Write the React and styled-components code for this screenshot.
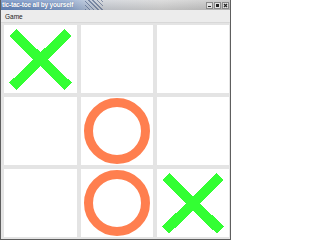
import React from "react";
import styled, { createGlobalStyle } from "styled-components";

const GlobalStyle = createGlobalStyle`
  html, body {
    margin: 0;
    padding: 0;
    background: #ffffff;
  }
  body {
    font-family: "DejaVu Sans", "Liberation Sans", sans-serif;
  }
`;

const colors = {
  frame: "#5e5e5e",
  board: "#e4e4e4",
  cell: "#ffffff",
  cross: "#33ff33",
  nought: "#ff7f4f",
  menu: "#ececec",
};

const Window = styled.div`
  width: 231px;
  height: 240px;
  box-sizing: border-box;
  display: flex;
  flex-direction: column;
  border: 1px solid ${colors.frame};
  border-top: none;
  overflow: hidden;
`;

const TitleBar = styled.div`
  height: 10px;
  flex: none;
  display: flex;
  align-items: center;
  margin: 0 -1px;
  background:
    linear-gradient(180deg, rgba(255, 255, 255, 0.25), rgba(0, 0, 0, 0.08)),
    linear-gradient(90deg, #5f82bb 0%, #7f9cc9 28%, #a4b6d2 36%, #c9cdd4 43%, #d2d2d2 70%, #bdbdbd 100%);
`;

const Title = styled.span`
  color: #ffffff;
  font-family: "Liberation Sans", sans-serif;
  font-weight: bold;
  font-size: 6.5px;
  letter-spacing: -0.2px;
  line-height: 10px;
  padding-left: 2px;
  white-space: nowrap;
  text-shadow: 0 0 1px rgba(40, 60, 100, 0.6);
`;

const Stripes = styled.div`
  width: 18px;
  height: 10px;
  margin-right: auto;
  margin-left: 12px;
  background: repeating-linear-gradient(
    45deg,
    rgba(60, 80, 120, 0.55) 0 1px,
    transparent 1px 3px
  );
`;

const Buttons = styled.div`
  display: flex;
  gap: 1px;
  padding-right: 2px;
`;

const WinButton = styled.div`
  width: 7px;
  height: 7px;
  box-sizing: border-box;
  border: 1px solid #8a8a8a;
  background: #e2e2e2;
  display: flex;
  align-items: center;
  justify-content: center;
`;

const MenuBar = styled.div`
  height: 12px;
  flex: none;
  background: ${colors.menu};
  border-bottom: 1px solid #d8d8d8;
  display: flex;
  align-items: center;
  padding-left: 4px;
  font-family: "Liberation Sans", sans-serif;
  font-size: 6.5px;
  color: #222222;
`;

const Board = styled.div`
  flex: 1;
  min-height: 0;
  display: grid;
  grid-template-columns: 73px 1fr 1fr;
  grid-template-rows: repeat(3, minmax(0, 1fr));
  gap: 4px;
  padding: 2px 1px 2px 3px;
  background: ${colors.board};
`;

const Cell = styled.div`
  background: ${colors.cell};
  position: relative;
  min-width: 0;
  min-height: 0;
`;

const Mark = styled.svg`
  position: absolute;
  inset: 0;
  width: 100%;
  height: 100%;
`;

function Cross() {
  return (
    <Mark shapeRendering="crispEdges">
      <line x1="12%" y1="11%" x2="88%" y2="90%" stroke={colors.cross} strokeWidth="10" />
      <line x1="88%" y1="11%" x2="12%" y2="90%" stroke={colors.cross} strokeWidth="10" />
    </Mark>
  );
}

function Nought() {
  return (
    <Mark>
      <circle cx="50%" cy="50%" r="28.5" fill="none" stroke={colors.nought} strokeWidth="9" />
    </Mark>
  );
}

const board = ["x", "", "", "", "o", "", "", "o", "x"];

export default function App() {
  return (
    <>
      <GlobalStyle />
      <Window>
        <TitleBar>
          <Title>tic-tac-toe all by yourself</Title>
          <Stripes />
          <Buttons>
            <WinButton>
              <svg width="5" height="5">
                <rect x="1" y="3" width="3" height="1" fill="#222" />
              </svg>
            </WinButton>
            <WinButton>
              <svg width="5" height="5">
                <rect x="1" y="1" width="3" height="3" fill="#222" />
              </svg>
            </WinButton>
            <WinButton>
              <svg width="5" height="5">
                <path d="M1 1 L4 4 M4 1 L1 4" stroke="#222" strokeWidth="1.2" />
              </svg>
            </WinButton>
          </Buttons>
        </TitleBar>
        <MenuBar>Game</MenuBar>
        <Board>
          {board.map((v, i) => (
            <Cell key={i}>
              {v === "x" && <Cross />}
              {v === "o" && <Nought />}
            </Cell>
          ))}
        </Board>
      </Window>
    </>
  );
}
